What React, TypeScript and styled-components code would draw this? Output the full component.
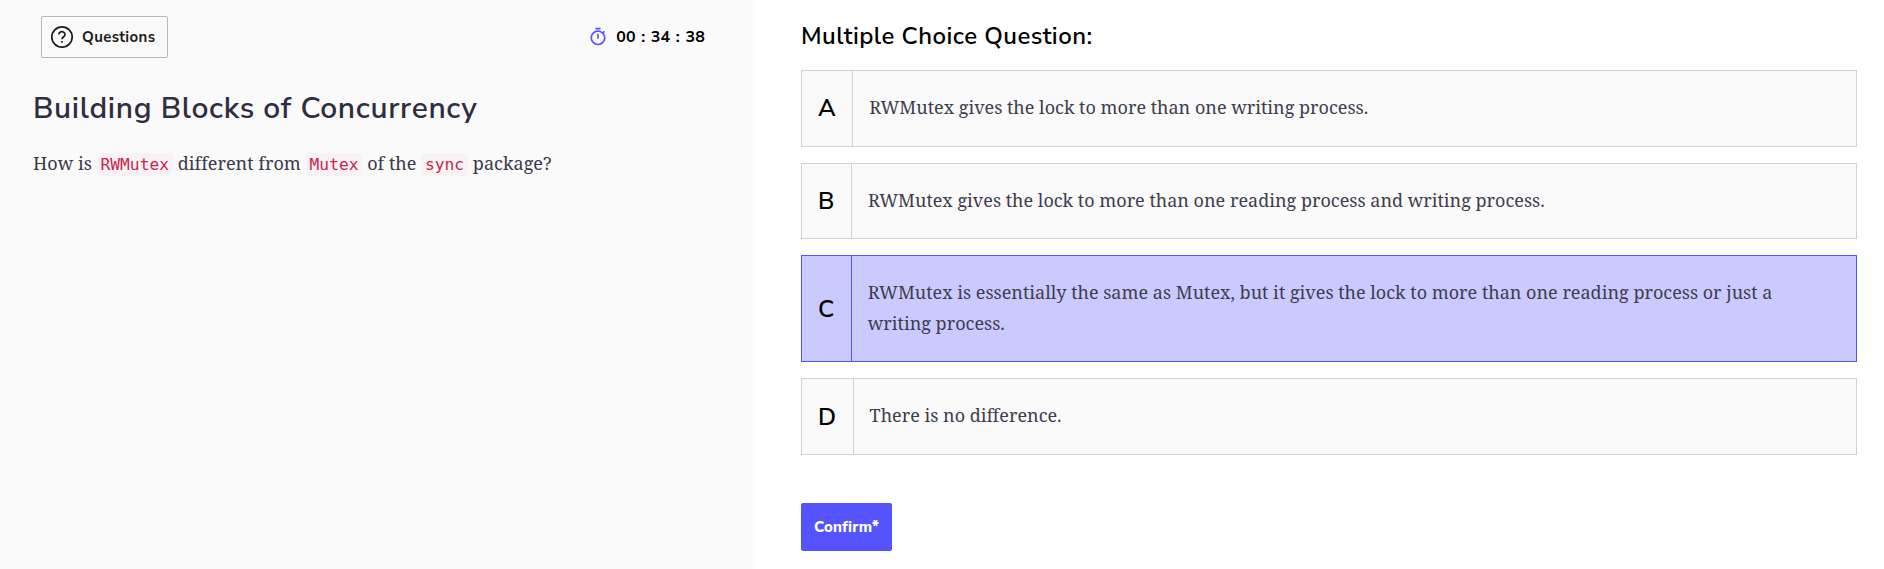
import React from 'react';
import styled, { createGlobalStyle } from 'styled-components';

const sans = `'Nunito Sans', Nunito, Lato, sans-serif`;
const serif = `'Noto Serif', 'Droid Serif', 'DejaVu Serif Condensed', serif`;

const GlobalStyle = createGlobalStyle`
  * { box-sizing: border-box; }
  body { margin: 0; background: #fff; }
  h1, h2, p { margin: 0; }
`;

const Page = styled.main`
  display: flex;
  height: 569px;
  overflow: hidden;
`;

const QuestionPane = styled.section`
  flex: 0 0 753px;
  padding: 16px 48px 0 33px;
  background: #fafafa;
  color: #2f2d40;
`;

const AnswerPane = styled.section`
  flex: 1;
  padding: 20px 27px 0 48px;
`;

const TopBar = styled.div`
  display: flex;
  align-items: center;
  justify-content: space-between;
  height: 42px;
  padding-left: 8px;
`;

const QuestionsButton = styled.button`
  display: flex;
  align-items: center;
  gap: 8px;
  width: 127px;
  height: 42px;
  padding: 0 0 0 8px;
  border: 1px solid #b7b7b7;
  border-radius: 2px;
  background: #fafafa;
  color: #1c1c1c;
  font: 700 15px/20px ${sans};
  letter-spacing: 0.35px;
`;

const Timer = styled.div`
  display: flex;
  align-items: center;
  gap: 8px;
  color: #000;
  font: 700 16px/20px ${sans};
  letter-spacing: 0.2px;
  word-spacing: 0.9px;
`;

const Title = styled.h1`
  margin-top: 30px;
  font: 600 30px/42px ${sans};
  letter-spacing: 0.65px;
`;

const Prompt = styled.p`
  margin-top: 18px;
  font: 400 18px/31px ${serif};
  color: #3a384a;
  letter-spacing: 0.02px;
`;

const Code = styled.code`
  padding: 2px 4px;
  border-radius: 4px;
  background: #f9f2f4;
  color: #c7254e;
  font: 16.2px/19px 'DejaVu Sans Mono', monospace;
`;

const Heading = styled.h2`
  color: #000;
  font: 600 24px/32px ${sans};
  letter-spacing: 0.44px;
`;

const OptionList = styled.div`
  display: flex;
  flex-direction: column;
  gap: 16px;
  margin-top: 18px;
`;

const Option = styled.div<{ $selected?: boolean }>`
  --line: ${(p) => (p.$selected ? '#5553ff' : '#d0d1d4')};
  display: flex;
  border: 1px solid var(--line);
  background: ${(p) => (p.$selected ? '#cbcaff' : '#fafafa')};
`;

const OptionLetter = styled.div`
  display: flex;
  align-items: center;
  padding: 0 16px;
  border-right: 1px solid var(--line);
  color: #000;
  font: 600 24px/32px ${sans};
  letter-spacing: 0.57px;
`;

const OptionText = styled.p`
  flex: 1;
  padding: 21px 60px 23px 16px;
  color: #3d3d4e;
  font: 400 18px/30.6px ${serif};
`;

const ConfirmButton = styled.button`
  display: block;
  width: 91px;
  height: 48px;
  margin-top: 48px;
  padding: 0;
  border: 0;
  border-radius: 2px;
  background: #5553ff;
  color: #fff;
  font: 800 15px/20px ${sans};
  letter-spacing: 0.2px;
`;

const HelpIcon = () => (
  <svg width="24" height="24" viewBox="0 0 24 24" fill="none" stroke="currentColor" strokeWidth="1.7">
    <circle cx="12" cy="12" r="10.2" />
    <path d="M8.8 9.4a3.1 2.8 0 1 1 4.9 2.3c-1 .7-1.7 1.2-1.7 2.5" />
    <path d="M12 16v1.8" />
  </svg>
);

const TimerIcon = () => (
  <svg width="20" height="20" viewBox="0 0 24 24" fill="#5553ff">
    <path d="M15 1H9v2h6V1zm-4 13h2V8h-2v6zm8.03-6.61 1.42-1.42c-.43-.51-.9-.99-1.41-1.41l-1.42 1.42A8.962 8.962 0 0 0 12 4c-4.97 0-9 4.03-9 9s4.02 9 9 9a8.994 8.994 0 0 0 7.03-14.61zM12 20c-3.87 0-7-3.13-7-7s3.13-7 7-7 7 3.13 7 7-3.13 7-7 7z" />
  </svg>
);

const options = [
  { letter: 'A', text: 'RWMutex gives the lock to more than one writing process.' },
  { letter: 'B', text: 'RWMutex gives the lock to more than one reading process and writing process.' },
  {
    letter: 'C',
    text: 'RWMutex is essentially the same as Mutex, but it gives the lock to more than one reading process or just a writing process.',
  },
  { letter: 'D', text: 'There is no difference.' },
];

export default function App() {
  return (
    <>
      <GlobalStyle />
      <Page>
        <QuestionPane>
          <TopBar>
            <QuestionsButton>
              <HelpIcon />
              Questions
            </QuestionsButton>
            <Timer>
              <TimerIcon />
              00 : 34 : 38
            </Timer>
          </TopBar>
          <Title>Building Blocks of Concurrency</Title>
          <Prompt>
            How is <Code>RWMutex</Code> different from <Code>Mutex</Code> of the <Code>sync</Code> package?
          </Prompt>
        </QuestionPane>
        <AnswerPane>
          <Heading>Multiple Choice Question:</Heading>
          <OptionList>
            {options.map((o) => (
              <Option key={o.letter} $selected={o.letter === 'C'}>
                <OptionLetter>{o.letter}</OptionLetter>
                <OptionText>{o.text}</OptionText>
              </Option>
            ))}
          </OptionList>
          <ConfirmButton>Confirm*</ConfirmButton>
        </AnswerPane>
      </Page>
    </>
  );
}
